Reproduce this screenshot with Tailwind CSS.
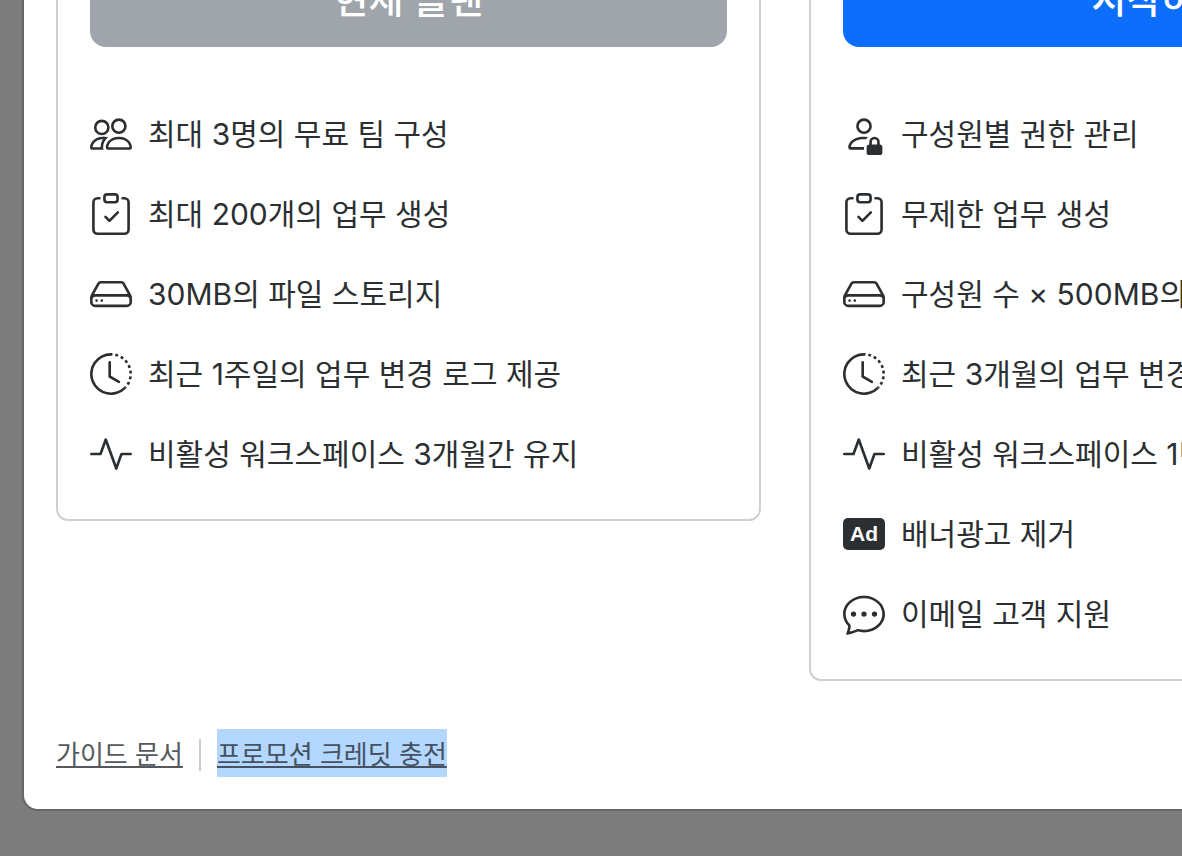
<!DOCTYPE html>
<html lang="ko">
<head>
    <meta charset="UTF-8">
    <meta name="viewport" content="width=device-width, initial-scale=1.0">
    <title>플랜 선택</title>
    <script src="https://cdn.jsdelivr.net/npm/@tailwindcss/browser@4"></script>
</head>
<body class="h-screen overflow-hidden bg-[#7c7c7c] font-['Inter','Noto_Sans_CJK_KR',sans-serif] text-[#2b2f32]">
    <!-- Icons -->
    <svg class="hidden">
        <symbol id="people" viewBox="0 0 16 16">
            <path d="M15 14s1 0 1-1-1-4-5-4-5 3-5 4 1 1 1 1zm-7.978-1L7 12.996c.001-.264.167-1.03.76-1.72C8.312 10.629 9.282 10 11 10c1.717 0 2.687.63 3.24 1.276.593.69.758 1.457.76 1.72l-.008.002-.014.002zM11 7a2 2 0 1 0 0-4 2 2 0 0 0 0 4m3-2a3 3 0 1 1-6 0 3 3 0 0 1 6 0M6.936 9.28a6 6 0 0 0-1.23-.247A7 7 0 0 0 5 9c-4 0-5 3-5 4q0 1 1 1h4.216A2.24 2.24 0 0 1 5 13c0-1.01.377-2.042 1.09-2.904.243-.294.54-.567.846-.816M4.92 10A5.5 5.5 0 0 0 4 13H1c0-.26.164-1.03.76-1.724.545-.636 1.492-1.256 3.16-1.275ZM1.5 5.5a3 3 0 1 1 6 0 3 3 0 0 1-6 0m3-2a2 2 0 1 0 0 4 2 2 0 0 0 0-4"/>
        </symbol>
        <symbol id="person-lock" viewBox="0 0 16 16">
            <path d="M11 5a3 3 0 1 1-6 0 3 3 0 0 1 6 0M8 7a2 2 0 1 0 0-4 2 2 0 0 0 0 4m0 5.996V14H3s-1 0-1-1 1-4 6-4q.845.002 1.544.107a4.5 4.5 0 0 0-.803.918A11 11 0 0 0 8 10c-2.29 0-3.516.68-4.168 1.332-.678.678-.83 1.418-.832 1.664zM9 13a1 1 0 0 1 1-1v-1a2 2 0 1 1 4 0v1a1 1 0 0 1 1 1v2a1 1 0 0 1-1 1h-4a1 1 0 0 1-1-1zm3-3a1 1 0 0 0-1 1v1h2v-1a1 1 0 0 0-1-1"/>
        </symbol>
        <symbol id="clipboard" viewBox="0 0 16 16">
            <g fill="none" stroke="currentColor" stroke-linecap="round" stroke-linejoin="round">
                <path d="M3.6 2H2.9a1.6 1.6 0 0 0-1.6 1.6v10.3a1.6 1.6 0 0 0 1.6 1.6h10.2a1.6 1.6 0 0 0 1.6-1.6V3.6A1.6 1.6 0 0 0 13.1 2h-.7"/>
                <rect x="5.5" y=".5" width="5" height="3" rx="1"/>
                <path d="m5.9 9.1 1.5 1.5 3.2-3.2"/>
            </g>
        </symbol>
        <symbol id="hdd" viewBox="0 0 16 16">
            <path d="M4.5 11a.5.5 0 1 0 0-1 .5.5 0 0 0 0 1M3 10.5a.5.5 0 1 1-1 0 .5.5 0 0 1 1 0"/>
            <path d="M16 11a2 2 0 0 1-2 2H2a2 2 0 0 1-2-2V9.51c0-.418.105-.83.305-1.197l2.472-4.531A1.5 1.5 0 0 1 4.094 3h7.812a1.5 1.5 0 0 1 1.317.782l2.472 4.53c.2.368.305.78.305 1.198zM3.655 4.26 1.592 8.043Q1.79 8 2 8h12q.21 0 .408.042L12.345 4.26a.5.5 0 0 0-.439-.26H4.094a.5.5 0 0 0-.44.26zM1 10v1a1 1 0 0 0 1 1h12a1 1 0 0 0 1-1v-1a1 1 0 0 0-1-1H2a1 1 0 0 0-1 1"/>
        </symbol>
        <symbol id="clock-history" viewBox="0 0 16 16">
            <path d="M8.515 1.019A7 7 0 0 0 8 1V0a8 8 0 0 1 .589.022zm2.004.45a7 7 0 0 0-.985-.299l.219-.976q.576.129 1.126.342zm1.37.71a7 7 0 0 0-.439-.27l.493-.87a8 8 0 0 1 .979.654l-.615.789a7 7 0 0 0-.418-.302zm1.834 1.79a7 7 0 0 0-.653-.796l.724-.69q.406.429.747.91zm.744 1.352a7 7 0 0 0-.214-.468l.893-.45a8 8 0 0 1 .45 1.088l-.95.313a7 7 0 0 0-.179-.483m.53 2.507a7 7 0 0 0-.1-1.025l.985-.17q.1.58.116 1.17zm-.131 1.538q.05-.254.081-.51l.993.123a8 8 0 0 1-.23 1.155l-.964-.267q.069-.247.12-.501m-.952 2.379q.276-.436.486-.908l.914.405q-.24.54-.555 1.038zm-.964 1.205q.183-.183.35-.378l.758.653a8 8 0 0 1-.401.432z"/>
            <path d="M8 1a7 7 0 1 0 4.95 11.95l.707.707A8.001 8.001 0 1 1 8 0z"/>
            <path d="M7.5 3a.5.5 0 0 1 .5.5v5.21l3.248 1.856a.5.5 0 0 1-.496.868l-3.5-2A.5.5 0 0 1 7 9V3.5a.5.5 0 0 1 .5-.5"/>
        </symbol>
        <symbol id="activity" viewBox="0 0 16 16">
            <path d="M6 2a.5.5 0 0 1 .47.33L10 12.036l1.53-4.208A.5.5 0 0 1 12 7.5h3.5a.5.5 0 0 1 0 1h-3.15l-1.88 5.17a.5.5 0 0 1-.94 0L6 3.964 4.47 8.171A.5.5 0 0 1 4 8.5H.5a.5.5 0 0 1 0-1h3.15l1.88-5.17A.5.5 0 0 1 6 2"/>
        </symbol>
        <symbol id="chat-dots" viewBox="0 0 16 16">
            <path d="M5 8a1 1 0 1 1-2 0 1 1 0 0 1 2 0m4 0a1 1 0 1 1-2 0 1 1 0 0 1 2 0m3 1a1 1 0 1 0 0-2 1 1 0 0 0 0 2"/>
            <path d="m2.165 15.803.02-.004c1.83-.363 2.948-.842 3.468-1.105A9 9 0 0 0 8 15c4.418 0 8-3.134 8-7s-3.582-7-8-7-8 3.134-8 7c0 1.76.743 3.37 1.97 4.6a10.4 10.4 0 0 1-.524 2.318l-.003.011a11 11 0 0 1-.244.637c-.079.186.074.394.273.362a22 22 0 0 0 .693-.125m.8-3.108a1 1 0 0 0-.287-.801C1.618 10.83 1 9.468 1 8c0-3.192 3.004-6 7-6s7 2.808 7 6-3.004 6-7 6a8 8 0 0 1-2.088-.272 1 1 0 0 0-.711.074c-.387.196-1.24.57-2.634.893a11 11 0 0 0 .398-2"/>
        </symbol>
    </svg>

    <div class="flex h-full items-end pb-[45px] pl-[22px]">
        <div role="dialog" class="w-max shrink-0 rounded-2xl border-2 border-[#666666] bg-white px-8 pb-8">
            <div class="grid grid-cols-[705px_705px] items-start gap-12">
                <!-- Free plan -->
                <section class="rounded-xl border-2 border-[#d0d0d0] px-8 pt-8 pb-[42px]">
                    <button disabled class="h-24 w-full rounded-2xl bg-[#a0a4ab] text-[38px] font-medium text-white">현재 플랜</button>
                    <ul class="mt-16 flex flex-col gap-[34px] text-[30px] leading-[46px] whitespace-nowrap">
                        <li class="flex h-[46px] items-center gap-4">
                            <svg class="size-[42px] shrink-0 fill-current"><use href="#people"/></svg>
                            <span>최대 3명의 무료 팀 구성</span>
                        </li>
                        <li class="flex h-[46px] items-center gap-4">
                            <svg class="size-[42px] shrink-0 fill-current"><use href="#clipboard"/></svg>
                            <span>최대 200개의 업무 생성</span>
                        </li>
                        <li class="flex h-[46px] items-center gap-4">
                            <svg class="size-[42px] shrink-0 fill-current"><use href="#hdd"/></svg>
                            <span>30MB의 파일 스토리지</span>
                        </li>
                        <li class="flex h-[46px] items-center gap-4">
                            <svg class="size-[42px] shrink-0 fill-current"><use href="#clock-history"/></svg>
                            <span>최근 1주일의 업무 변경 로그 제공</span>
                        </li>
                        <li class="flex h-[46px] items-center gap-4">
                            <svg class="size-[42px] shrink-0 fill-current"><use href="#activity"/></svg>
                            <span>비활성 워크스페이스 3개월간 유지</span>
                        </li>
                    </ul>
                </section>

                <!-- Paid plan -->
                <section class="rounded-xl border-2 border-[#d0d0d0] px-8 pt-8 pb-[42px]">
                    <button class="h-24 w-full rounded-2xl bg-[#0d6efd] text-[38px] font-medium text-white">시작하기</button>
                    <ul class="mt-16 flex flex-col gap-[34px] text-[30px] leading-[46px] whitespace-nowrap">
                        <li class="flex h-[46px] items-center gap-4">
                            <svg class="size-[42px] shrink-0 fill-current"><use href="#person-lock"/></svg>
                            <span>구성원별 권한 관리</span>
                        </li>
                        <li class="flex h-[46px] items-center gap-4">
                            <svg class="size-[42px] shrink-0 fill-current"><use href="#clipboard"/></svg>
                            <span>무제한 업무 생성</span>
                        </li>
                        <li class="flex h-[46px] items-center gap-4">
                            <svg class="size-[42px] shrink-0 fill-current"><use href="#hdd"/></svg>
                            <span>구성원 수 × 500MB의 파일 스토리지</span>
                        </li>
                        <li class="flex h-[46px] items-center gap-4">
                            <svg class="size-[42px] shrink-0 fill-current"><use href="#clock-history"/></svg>
                            <span>최근 3개월의 업무 변경 로그 제공</span>
                        </li>
                        <li class="flex h-[46px] items-center gap-4">
                            <svg class="size-[42px] shrink-0 fill-current"><use href="#activity"/></svg>
                            <span>비활성 워크스페이스 1년간 유지</span>
                        </li>
                        <li class="flex h-[46px] items-center gap-4">
                            <span class="flex h-8 w-[42px] shrink-0 items-center justify-center rounded-[5px] bg-[#2b2f32] font-['Liberation_Sans',sans-serif] text-[21px] leading-8 font-bold text-white">Ad</span>
                            <span>배너광고 제거</span>
                        </li>
                        <li class="flex h-[46px] items-center gap-4">
                            <svg class="size-[42px] shrink-0 fill-current"><use href="#chat-dots"/></svg>
                            <span>이메일 고객 지원</span>
                        </li>
                    </ul>
                </section>
            </div>

            <div class="mt-12 flex items-center gap-4 text-[26px] leading-[44px] text-[#54595e]">
                <a href="#" class="pt-1 underline decoration-2 underline-offset-2 [text-decoration-skip-ink:none]">가이드 문서</a>
                <span class="mt-1 h-8 w-0.5 bg-[#cccccc]"></span>
                <a href="#" class="bg-[#b3d7ff] pt-1 text-[#45525f] underline decoration-2 underline-offset-2 [text-decoration-skip-ink:none]">프로모션 크레딧 충전</a>
            </div>
        </div>
    </div>
</body>
</html>
